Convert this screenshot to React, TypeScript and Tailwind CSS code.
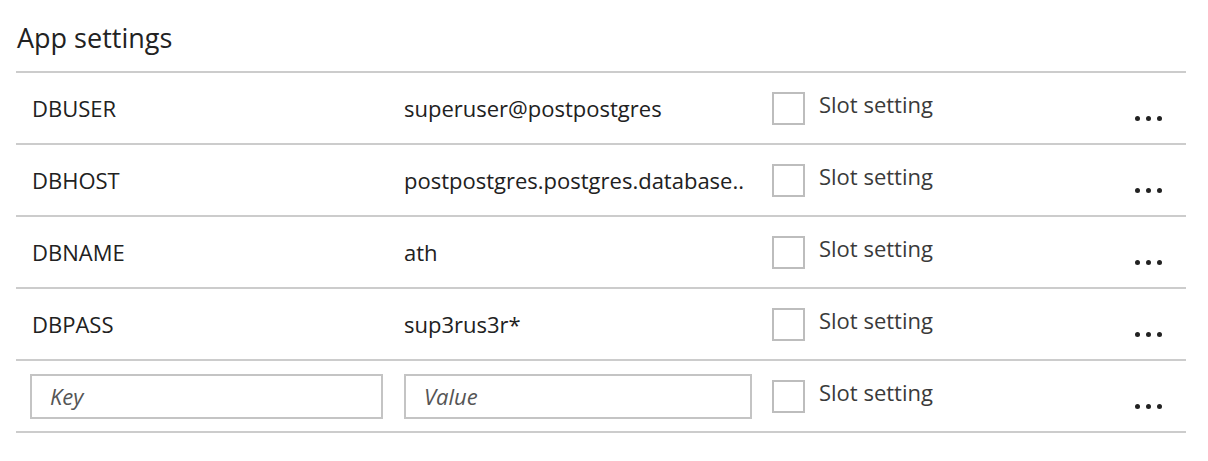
type Setting = {
  name: string;
  value: string;
};

const settings: Setting[] = [
  { name: "DBUSER", value: "superuser@postpostgres" },
  { name: "DBHOST", value: "postpostgres.postgres.database.." },
  { name: "DBNAME", value: "ath" },
  { name: "DBPASS", value: "sup3rus3r*" },
];

const SlotSetting = () => (
  <div className="flex items-center w-[340px]">
    <span className="w-[33px] h-[33px] border-2 border-[#bdbdbd] bg-white shrink-0" />
    <span className="ml-[14px] mb-[8px] text-[#3a3a3a]">Slot setting</span>
  </div>
);

const MoreButton = () => (
  <button className="flex gap-[6px] mt-[20px] ml-auto mr-[24px]">
    <span className="w-[5px] h-[5px] rounded-full bg-[#222]" />
    <span className="w-[5px] h-[5px] rounded-full bg-[#222]" />
    <span className="w-[5px] h-[5px] rounded-full bg-[#222]" />
  </button>
);

const App = () => {
  return (
    <div
      className="w-[1208px] h-[461px] bg-white pl-[16px] text-[22px] text-[#212121]"
      style={{ fontFamily: '"Open Sans", "Noto Sans", sans-serif' }}
    >
      <h2 className="h-[71px] pt-[22px] pl-[1px] text-[27px] leading-[32px] text-[#222]">
        App settings
      </h2>
      <div className="w-[1170px] border-t-2 border-[#cccccc]">
        {settings.map((s) => (
          <div
            key={s.name}
            className="flex items-center h-[72px] border-b-2 border-[#cccccc] pl-[14px]"
          >
            <div className="w-[374px] pl-[2px]">{s.name}</div>
            <div className="w-[368px] pr-[20px] whitespace-nowrap overflow-hidden">
              {s.value}
            </div>
            <SlotSetting />
            <MoreButton />
          </div>
        ))}
        <div className="flex items-center h-[72px] border-b-2 border-[#cccccc] pl-[14px]">
          <div className="w-[374px]">
            <input
              type="text"
              placeholder="Key"
              className="w-[353px] h-[45px] border-2 border-[#c4c4c4] px-[18px] italic placeholder:text-[#555] outline-none"
            />
          </div>
          <div className="w-[368px]">
            <input
              type="text"
              placeholder="Value"
              className="w-[348px] h-[45px] border-2 border-[#c4c4c4] px-[18px] italic placeholder:text-[#555] outline-none"
            />
          </div>
          <SlotSetting />
          <MoreButton />
        </div>
      </div>
    </div>
  );
};

export default App;
